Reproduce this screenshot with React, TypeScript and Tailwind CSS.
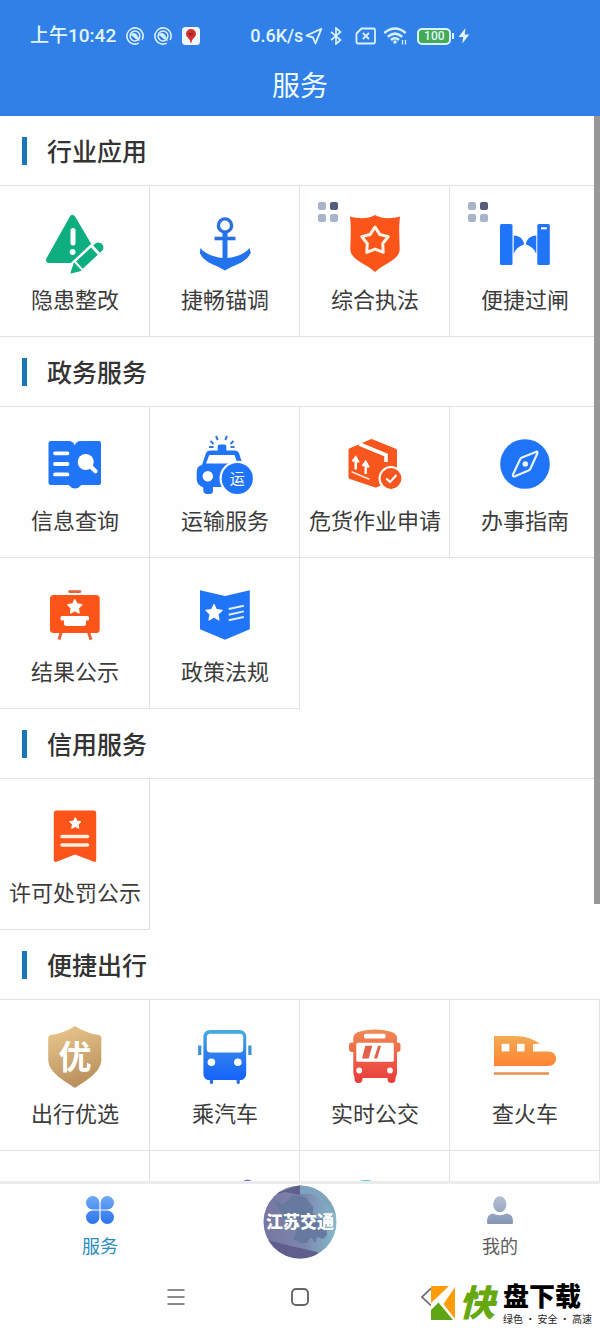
import type { ReactNode } from "react";

type Service = { name: string; icon: ReactNode; pinned?: boolean };
type Section = { title: string; items: Service[] };

const BLUE = "#1f74f8";
const ORANGE = "#fd5519";
const GREEN = "#0fae80";

function Icon({ children }: { children?: ReactNode }) {
  return (
    <svg viewBox="0 0 60 60" className="size-15 shrink-0 overflow-visible" aria-hidden="true">
      {children}
    </svg>
  );
}

function starPoints(cx: number, cy: number, r: number, inner = 0.5) {
  return Array.from({ length: 10 }, (_, i) => {
    const radius = i % 2 ? r * inner : r;
    const a = -Math.PI / 2 + (i * Math.PI) / 5;
    return `${(cx + radius * Math.cos(a)).toFixed(2)},${(cy + radius * Math.sin(a)).toFixed(2)}`;
  }).join(" ");
}

const hazard = (
  <Icon>
    <path d="M27.5 4 44 32 30 46H4Z" fill={GREEN} stroke={GREEN} strokeWidth="6" strokeLinejoin="round" />
    <path d="M28 16.5V29" stroke="#fff" strokeWidth="5" strokeLinecap="round" />
    <circle cx="27.6" cy="38" r="2.9" fill="#fff" />
    <g transform="translate(26 59) rotate(-43)">
      <path d="M-3 0 7-7.500H38a7.500 7.500 0 0 1 0 15H7Z" fill="#fff" />
      <path d="M0 0 9-5V5Z" fill={GREEN} stroke={GREEN} strokeWidth="1" strokeLinejoin="round" />
      <path d="M11.500-5H32V5H11.500Z" fill={GREEN} />
      <path d="M35-5H37.500a5 5 0 0 1 0 10H35Z" fill={GREEN} />
    </g>
  </Icon>
);

const anchor = (
  <Icon>
    <circle cx="30" cy="11.5" r="6.600" fill="none" stroke="#2b6fdc" strokeWidth="3.400" />
    <path d="M19.500 24.500H40.500" stroke="#2b6fdc" strokeWidth="3.600" />
    <path
      d="M5.500 34C9 39 18 43 27.500 44V18h5V44C42 43 51 39 54.500 34L55.800 39C50 50 38 51 30 56.500 22 51 10 50 4.800 39Z"
      fill="#2372ee"
    />
  </Icon>
);

const enforcement = (
  <Icon>
    <path d="M5 2.500C14 5 23 5 30 1 37 5 46 5 55 2.500 53.500 14 54.500 24 54.700 34 55 46 41 48 30 58 19 48 5 46 5.300 34 5.500 24 6.500 14 5 2.500Z" fill={ORANGE} />
    <polygon points={starPoints(30, 27, 14, 0.58)} fill="none" stroke="#fff3e6" strokeWidth="3" strokeLinejoin="round" />
  </Icon>
);

const gate = (
  <Icon>
    <rect x="5" y="10" width="12.500" height="41" rx="1.500" fill={BLUE} />
    <rect x="42.300" y="10" width="12.500" height="41" rx="1.500" fill={BLUE} />
    <path d="M18.700 21.500C25 21.500 29 26 29 30.500 24 32 20.500 35 18.700 40ZM41.300 21.500C35 21.500 31 26 31 30.500 36 32 39.500 35 41.300 40Z" fill={BLUE} />
    <path d="M46 14.300h5.800" stroke="#fff" strokeWidth="2" />
  </Icon>
);

const book = (
  <Icon>
    <path d="M6 6H23C27 6 29 8 29.700 10.500 30.500 8 32.500 6 36 6H53.500A2.500 2.500 0 0 1 56 8.500V47.500A2.500 2.500 0 0 1 53.500 50H37C35 50 34.500 53.500 30 53.500S25 50 23 50H6A2.500 2.500 0 0 1 3.500 47.500V8.500A2.500 2.500 0 0 1 6 6Z" fill={BLUE} />
    <path d="M10 18.300H22.500M10 29H22.500M10 39.400H22.500" stroke="#fff" strokeWidth="3.800" strokeLinecap="round" />
    <circle cx="40.700" cy="27" r="8" fill="#fff" />
    <path d="M43 29 50.500 36.300" stroke="#fff" strokeWidth="4.200" strokeLinecap="round" />
  </Icon>
);

const taxi = (
  <Icon>
    <path d="M21 1 22.700 5M32 1 30.300 5M15.500 6 18.500 9M38.500 6 35.500 9M14 12H18.500M39.500 12H35.500" stroke="#3478dc" strokeWidth="2" />
    <path d="M22.700 16V11.500a2 2 0 0 1 2-2h4.600a2 2 0 0 1 2 2V16Z" fill={BLUE} />
    <path d="M7 30 11 18Q12 15.500 15 15.500H40Q43 15.500 44 18L48 31 50 52H18V55.500a3.500 3.500 0 0 1-3.500 3.500h-2.500A3.500 3.500 0 0 1 8.300 55.500V52.500Q1.700 50 1.700 44V37Q1.700 31 7 30Z" fill={BLUE} />
    <path d="M14.300 20H39.500L42.500 28.500H11Z" fill="#fff" />
    <circle cx="12.800" cy="41.300" r="5.200" fill="#fff" />
    <circle cx="42.300" cy="43.500" r="17.800" fill="#fff" />
    <circle cx="42.300" cy="43.500" r="15.600" fill={BLUE} />
    <text x="42.300" y="49" textAnchor="middle" fontSize="15" fill="#fff">运</text>
  </Icon>
);

const cargo = (
  <Icon>
    <path d="M5.500 15 26.500 6 50 15.500V42L31 50.500 5.500 42Z" fill="#f8561f" stroke="#f8561f" strokeWidth="4" strokeLinejoin="round" />
    <path d="M14.300 9 41 20V27" fill="none" stroke="#fff" strokeWidth="3.600" />
    <path d="M10.700 34.500V23.500M7.700 26.500 10.700 22.500 13.700 27.500M20.700 39V28.500M17.700 31 20.700 27 23.700 32.500" fill="none" stroke="#fff" strokeWidth="2.400" />
    <path d="M6.500 36.800 24.500 44.200" stroke="#ffe4d4" strokeWidth="1.600" />
    <circle cx="46" cy="43.500" r="12.500" fill="#fff" />
    <circle cx="46" cy="43.500" r="10.400" fill="#f8561f" />
    <path d="M41.300 43.500 45 47 51.500 40" fill="none" stroke="#fff" strokeWidth="2" />
  </Icon>
);

const compass = (
  <Icon>
    <circle cx="30" cy="29" r="24.800" fill={BLUE} />
    <path d="M41.500 16.700 27 22.500Q25.500 23 25 24.500L18 39.500Q17.500 42 20 41.300L33.500 35.500Q35 35 35.500 33.500L42.300 18.500Q42.700 16.500 41.500 16.700Z" fill="none" stroke="#e8f4ff" strokeWidth="2.200" strokeLinejoin="round" />
    <circle cx="30.300" cy="29" r="2.800" fill="#e8f4ff" />
  </Icon>
);

const results = (
  <Icon>
    <path d="M24.500 5.600h10.500" stroke="#e8623a" strokeWidth="2.600" strokeLinecap="round" />
    <path d="M16.200 46 14 53.700M43.500 46 46 53.700" stroke="#e8623a" strokeWidth="3" />
    <rect x="5" y="9" width="49.700" height="38" rx="3.500" fill={ORANGE} />
    <polygon points={starPoints(29.8, 21, 7.2)} fill="#fff" stroke="#fff" strokeWidth="1.500" strokeLinejoin="round" />
    <path d="M17 30H42.500a1.500 1.500 0 0 1 1.500 1.500V33a1.500 1.500 0 0 1-1.500 1.500H41V37.500a2.500 2.500 0 0 1-2.500 2.500H21.500A2.500 2.500 0 0 1 19 37.500V34.500H17A1.500 1.500 0 0 1 15.500 33V31.500A1.500 1.500 0 0 1 17 30Z" fill="#fff" />
  </Icon>
);

const policy = (
  <Icon>
    <path d="M5 4.300 30 10 54.800 4.300V43.300L30 53.800 5 43.300Z" fill={BLUE} />
    <polygon points={starPoints(19, 27, 8.5, 0.48)} fill="#fff" stroke="#fff" strokeWidth="1.200" strokeLinejoin="round" />
    <path d="M33.700 23 48.800 19.700M33.700 28.700 48.800 25.400M33.700 34.300 48.800 31" stroke="#e3f0ff" strokeWidth="1.900" />
  </Icon>
);

const permit = (
  <Icon>
    <path d="M12 3.500H48.500a2.700 2.700 0 0 1 2.700 2.700V53.500Q51 55.500 49 54.800L30 47.500 11.500 54.800Q9 55.500 8.800 53.500V6.200A2.700 2.700 0 0 1 12 3.500Z" fill={ORANGE} />
    <polygon points={starPoints(30.3, 16.5, 6, 0.5)} fill="#fff" stroke="#fff" strokeWidth="1" strokeLinejoin="round" />
    <path d="M17 29.500H42.500M17 38H42.500" stroke="#ffeedd" strokeWidth="3.600" strokeLinecap="round" />
  </Icon>
);

const premium = (
  <Icon>
    <defs>
      <linearGradient id="gold" x1="0" y1="0" x2="0.300" y2="1">
        <stop offset="0" stopColor="#ecc98f" />
        <stop offset="1" stopColor="#bb925f" />
      </linearGradient>
    </defs>
    <path d="M30-2C38 3 46 6 54 7Q56.300 7.500 56.300 10V32C56 44 42 52 30 60 18 52 3.500 44 3.200 32V10Q3.200 7.500 5.500 7C14 6 22 3 30-2Z" fill="url(#gold)" />
    <text x="30" y="41" textAnchor="middle" fontSize="33" fontWeight="700" fill="#fff">优</text>
  </Icon>
);

const coach = (
  <Icon>
    <defs>
      <linearGradient id="coach" x1="0" y1="0" x2="0" y2="1">
        <stop offset="0" stopColor="#46abe4" />
        <stop offset="0.500" stopColor="#2d7df0" />
        <stop offset="1" stopColor="#1463fb" />
      </linearGradient>
    </defs>
    <path d="M16.500 50V54.500M43.200 50V54.500" stroke="#2b70dd" strokeWidth="3.200" strokeLinecap="round" />
    <path d="M15 2H44.500A6.500 6.500 0 0 1 51.200 8.500V46Q51 50 47 52H12.500Q8.400 50 8.400 46V8.500A6.500 6.500 0 0 1 15 2Z" fill="url(#coach)" />
    <rect x="11.800" y="5.800" width="36.400" height="18.800" rx="3.500" fill="#fff" />
    <circle cx="16.400" cy="34.300" r="3.800" fill="#fff" />
    <circle cx="42.800" cy="34.300" r="3.800" fill="#fff" />
    <path d="M4.700 17.500v9.500M54.900 17.500v9.500" stroke="#3b93cf" strokeWidth="3.200" />
  </Icon>
);

const bus = (
  <Icon>
    <defs>
      <linearGradient id="bus" x1="0" y1="0" x2="0" y2="1">
        <stop offset="0" stopColor="#f18a52" />
        <stop offset="1" stopColor="#ea3a3c" />
      </linearGradient>
    </defs>
    <path
      d="M15 3.500Q30-.500 45 3.500 52 5 52 10V14.500H53A2.500 2.500 0 0 1 55.500 17V21A3 3 0 0 1 52.500 24H52V44Q52 48 50.500 49V51a4 4 0 0 1-8 0V50H17.500V51a4 4 0 0 1-8 0V49Q8.300 48 8.300 44V24H7A3 3 0 0 1 4 21V17A2.500 2.500 0 0 1 6.500 14.500H8.300V10Q8.300 5 15 3.500Z"
      fill="url(#bus)"
    />
    <rect x="19" y="5.800" width="21.500" height="4.800" rx="1.500" fill="#fff" />
    <rect x="11.300" y="14.700" width="37.500" height="19" rx="1.500" fill="#fff" />
    <path d="M20.300 17.700h7L23.700 30.500H17ZM33 17.700h3L32.300 30.500H29Z" fill="#e2604c" />
    <circle cx="14.200" cy="42.500" r="2.900" fill="#fff" />
    <circle cx="45" cy="42.500" r="2.900" fill="#fff" />
  </Icon>
);

const train = (
  <Icon>
    <defs>
      <linearGradient id="train" x1="0" y1="0" x2="0" y2="1">
        <stop offset="0" stopColor="#f3aa55" />
        <stop offset="1" stopColor="#ff8330" />
      </linearGradient>
    </defs>
    <path d="M-1 8H20C30 8 38 11 45 15.500L38 16.300V23.500H54A7 7 0 0 1 61 30.500C61 35 58 38 53 38H-1Z" fill="url(#train)" />
    <rect x="6.700" y="15.800" width="7.600" height="7.600" fill="#fff" />
    <rect x="22" y="15.800" width="7.600" height="7.600" fill="#fff" />
    <path d="M-1 45.500H54" stroke="#e3904f" strokeWidth="2.400" />
  </Icon>
);

const purpleTop = (
  <Icon>
    <circle cx="52.500" cy="7.500" r="7" fill="#8a70c8" />
  </Icon>
);

const cyanTop = (
  <Icon>
    <circle cx="21" cy="22.500" r="21.500" fill="#3fd0d2" />
  </Icon>
);

const sections: Section[] = [
  {
    title: "行业应用",
    items: [
      { name: "隐患整改", icon: hazard },
      { name: "捷畅锚调", icon: anchor },
      { name: "综合执法", icon: enforcement, pinned: true },
      { name: "便捷过闸", icon: gate, pinned: true },
    ],
  },
  {
    title: "政务服务",
    items: [
      { name: "信息查询", icon: book },
      { name: "运输服务", icon: taxi },
      { name: "危货作业申请", icon: cargo },
      { name: "办事指南", icon: compass },
      { name: "结果公示", icon: results },
      { name: "政策法规", icon: policy },
    ],
  },
  { title: "信用服务", items: [{ name: "许可处罚公示", icon: permit }] },
  {
    title: "便捷出行",
    items: [
      { name: "出行优选", icon: premium },
      { name: "乘汽车", icon: coach },
      { name: "实时公交", icon: bus },
      { name: "查火车", icon: train },
      { name: "", icon: <Icon /> },
      { name: "", icon: purpleTop },
      { name: "", icon: cyanTop },
      { name: "", icon: <Icon /> },
    ],
  },
];

function PinnedMark() {
  return (
    <span className="absolute top-4 left-[18px] grid grid-cols-2 gap-1">
      <i className="size-2 rounded-xs bg-[#a9b4ca]" />
      <i className="size-2 rounded-xs bg-[#565c7a]" />
      <i className="size-2 rounded-xs bg-[#a9b4ca]" />
      <i className="size-2 rounded-xs bg-[#a9b4ca]" />
    </span>
  );
}

function ServiceCell({ service }: { service: Service }) {
  return (
    <button
      type="button"
      className="relative flex h-[151px] flex-col items-center gap-[9px] border-r border-b border-[#e2e2e4] pt-7 pl-px"
    >
      {service.pinned && <PinnedMark />}
      {service.icon}
      <span className="text-[22px] leading-[30px] whitespace-nowrap text-[#3c3c3c]">{service.name}</span>
    </button>
  );
}

function ServiceSection({ section }: { section: Section }) {
  return (
    <section>
      <h2 className="flex h-[69px] items-center gap-5 pl-[22px] text-[25px] leading-9 font-medium text-[#333]">
        <i className="h-7 w-[5px] bg-[#1877b8]" />
        <span className="pb-0.5">{section.title}</span>
      </h2>
      <div className="grid grid-cols-4 border-t border-[#e2e2e4]">
        {section.items.map((item, i) => (
          <ServiceCell key={i} service={item} />
        ))}
      </div>
    </section>
  );
}

function SyncIcon() {
  return (
    <svg viewBox="0 0 18 18" className="size-[18px]" aria-hidden="true" fill="none" stroke="#d9f2ff">
      <circle cx="9" cy="9" r="8.100" strokeWidth="1.600" strokeDasharray="46 4.900" transform="rotate(62 9 9)" />
      <circle cx="9" cy="9" r="4.900" strokeWidth="1.500" />
      <path d="M5 8C6.500 5.500 9.500 6 11 8.500L13.500 13.500 9.500 11.500C8 10 7 9 5 8Z" fill="#d9f2ff" strokeWidth="0.600" />
    </svg>
  );
}

function StatusBar() {
  return (
    <div className="flex h-6 items-center pl-[30px] font-['Roboto','Noto_Sans_CJK_SC',sans-serif] text-[19px] leading-6 font-medium whitespace-nowrap text-[#e0f5ff]">
      <span>上午10:42</span>
      <span className="ml-2.5 flex items-center gap-2.5">
        <SyncIcon />
        <SyncIcon />
        <svg viewBox="0 0 18 18" className="size-[18px]" aria-hidden="true">
          <rect width="18" height="18" rx="3.500" fill="#f1f6fb" />
          <path d="M9 2a5 5 0 0 1 5 5c0 2.500-2.500 4-4.200 6.500V15.500H8.200V13.500C6.500 11 4 9.500 4 7a5 5 0 0 1 5-5Z" fill="#d6302f" />
          <path d="M6.500 6.500h5M7 8h4" stroke="#8b1c20" strokeWidth="1" />
        </svg>
      </span>
      <span className="ml-[50px] text-lg leading-6">0.6K/s</span>
      <svg viewBox="0 0 18 18" className="ml-0.5 size-[18px]" aria-hidden="true" fill="none" stroke="#d9f2ff" strokeWidth="1.900" strokeLinejoin="round">
        <path d="M16.300 1.800 1.500 8.500 8 10.500 10.500 16.500Z" />
      </svg>
      <svg viewBox="0 0 14 18" className="ml-1.5 h-[18px] w-3.5" aria-hidden="true" fill="none" stroke="#d9f2ff" strokeWidth="1.700">
        <path d="M2 4.800 11.500 13 7 17V1L11.500 5 2 13.200" />
      </svg>
      <svg viewBox="0 0 22 18" className="ml-3 h-[18px] w-[22px]" aria-hidden="true" fill="none" stroke="#d9f2ff" strokeWidth="1.800" strokeLinejoin="round">
        <path d="M6.500 1.500H18.500a1.500 1.500 0 0 1 1.500 1.500V15a1.500 1.500 0 0 1-1.500 1.500H3A1.500 1.500 0 0 1 1.500 15V6.500Z" />
        <path d="M7.800 6 14 12M14 6 7.800 12" />
      </svg>
      <svg viewBox="0 0 24 18" className="ml-1.5 h-[18px] w-6" aria-hidden="true" fill="none" stroke="#d9f2ff" strokeWidth="2.500">
        <path d="M1.300 6Q12-3 22.700 6M4.800 9.800Q12 3.500 19.200 9.800M8 13Q12 9.500 16 13" />
        <circle cx="12" cy="15" r="1.800" fill="#d9f2ff" stroke="none" />
        <path d="M19.500 13V17.500M22.500 13V17.500" strokeWidth="1.300" />
      </svg>
      <span className="ml-2.5 flex h-[17px] w-[34px] items-center justify-center rounded-[5px] border-2 border-[#d9f2ff] bg-[#44ab54] text-xs leading-3">
        100
      </span>
      <i className="ml-px h-1.5 w-0.5 bg-[#d9f2ff]" />
      <svg viewBox="0 0 12 18" className="ml-1 h-[18px] w-3" aria-hidden="true" fill="#e6f8ff">
        <path d="M7.500 1 .500 10H5.200L4.300 16.500 11.300 7.500H6.700Z" />
      </svg>
    </div>
  );
}

function TabBar() {
  return (
    <nav className="grid h-[79px] shrink-0 grid-cols-3 text-lg leading-6">
      <button type="button" className="flex flex-col items-center gap-[9px] pt-3 text-[#2b8cbe]">
        <svg viewBox="0 0 28 28" className="size-7" aria-hidden="true">
          <defs>
            <linearGradient id="clover" x1="0" y1="0" x2="0" y2="28" gradientUnits="userSpaceOnUse">
              <stop offset="0" stopColor="#6fa9f5" />
              <stop offset="1" stopColor="#2b73e8" />
            </linearGradient>
          </defs>
          <path
            d="M13.400 13.400H6.700A6.700 6.700 0 1 1 13.400 6.700ZM14.600 13.400V6.700A6.700 6.700 0 1 1 21.300 13.400ZM13.400 14.600V21.300A6.700 6.700 0 1 1 6.700 14.600ZM14.600 14.600H21.300A6.700 6.700 0 1 1 14.600 21.300Z"
            fill="url(#clover)"
          />
        </svg>
        服务
      </button>
      <button type="button" className="flex justify-center pt-px">
        <svg viewBox="0 0 74 74" className="size-[74px]" role="img" aria-label="江苏交通">
          <defs>
            <clipPath id="disc">
              <circle cx="37" cy="37" r="36.500" />
            </clipPath>
            <linearGradient id="sky" x1="0" y1="0" x2="1" y2="0">
              <stop offset="0" stopColor="#7777a0" />
              <stop offset="0.550" stopColor="#7c86ad" />
              <stop offset="1" stopColor="#84bacb" />
            </linearGradient>
          </defs>
          <g clipPath="url(#disc)">
            <rect width="74" height="74" fill="url(#sky)" />
            <path d="M8 10 37 0V10L22 7Z" fill="#605f8c" />
            <path d="M37 0H74V30L58 16 50 9H37Z" fill="#7fa4bd" />
            <path d="M0 54 28 61 54 67 60 74H0Z" fill="#5f5e8c" />
            <path d="M10 14 20 20 30 10 42 12 50 22V34H62L64 50 60 54 54 52 52 58 48 52 44 58H38L30 54 34 46 22 36 16 24Z" fill="#66799f" />
          </g>
          <text x="37" y="43" textAnchor="middle" fontSize="17" fontWeight="900" fill="#fff">江苏交通</text>
        </svg>
      </button>
      <button type="button" className="flex flex-col items-center gap-[9px] pt-3 text-[#5c5c5c]">
        <svg viewBox="0 0 28 28" className="size-7" aria-hidden="true">
          <defs>
            <linearGradient id="person" x1="0" y1="0" x2="0" y2="28" gradientUnits="userSpaceOnUse">
              <stop offset="0" stopColor="#b4c0d4" />
              <stop offset="1" stopColor="#8495b5" />
            </linearGradient>
          </defs>
          <ellipse cx="13.800" cy="8.300" rx="6.600" ry="8" fill="url(#person)" />
          <path d="M7 17.500Q13.500 21 20.500 17.500 27 18.500 27 25V26.500Q27 28 25.500 28H2.500Q1 28 1 26.500V25Q1 18.500 7 17.500Z" fill="url(#person)" />
        </svg>
        我的
      </button>
    </nav>
  );
}

function SystemNav() {
  return (
    <div className="relative flex h-[70px] shrink-0 justify-center pb-0.5 text-[#666]">
      <button type="button" aria-label="菜单" className="flex w-31 items-center justify-center">
        <svg viewBox="0 0 18 18" className="size-[18px]" stroke="currentColor" strokeWidth="1.700">
          <path d="M.500 2H17.500M.500 9H17.500M.500 16H17.500" />
        </svg>
      </button>
      <button type="button" aria-label="主屏幕" className="flex w-31 items-center justify-center">
        <svg viewBox="0 0 18 18" className="size-[18px]" fill="none" stroke="currentColor" strokeWidth="1.900">
          <rect x="1" y="1" width="16" height="16" rx="4" />
        </svg>
      </button>
      <button type="button" aria-label="返回" className="flex w-31 items-center justify-center">
        <svg viewBox="0 0 18 18" className="size-[18px]" fill="none" stroke="currentColor" strokeWidth="1.700">
          <path d="M16 .500 7 9 16 17.500" />
        </svg>
      </button>
      <div className="absolute right-2 bottom-2 flex items-center">
        <svg viewBox="0 0 24 34" className="h-[34px] w-6" aria-hidden="true">
          <rect width="24" height="34" fill="#fff" />
          <path d="M0 0H18L0 17ZM24 1V33L12.500 18Z" fill="#ff9c0a" />
          <path d="M0 34V24L7.500 16.500 22 34Z" fill="#5fa614" />
        </svg>
        <span className="ml-1 pb-1.5 text-[36px] leading-9 font-black text-[#66a80f] italic">快</span>
        <span className="ml-2 flex flex-col gap-1">
          <span className="text-[26px] leading-7 font-black text-black">盘下载</span>
          <span className="text-[10px] leading-3 whitespace-nowrap text-[#222]">绿色 · 安全 · 高速</span>
        </span>
      </div>
    </div>
  );
}

export default function App() {
  return (
    <div className="flex h-screen flex-col bg-[#fefefe] font-['Noto_Sans_CJK_SC',sans-serif]">
      <header className="shrink-0 bg-[#3180e8] pt-6 pb-3.5">
        <StatusBar />
        <h1 className="mt-[18px] text-center text-[28px] leading-9 text-[#effaff]">服务</h1>
      </header>
      <div className="relative min-h-0 flex-1">
        <main className="h-full overflow-y-auto [scrollbar-width:none]">
          {sections.map((section) => (
            <ServiceSection key={section.title} section={section} />
          ))}
        </main>
        <i className="absolute top-0 right-0 h-[74%] w-1.5 bg-[#979797]" />
      </div>
      <div className="h-[3px] shrink-0 bg-[#ebebed]" />
      <TabBar />
      <SystemNav />
    </div>
  );
}
